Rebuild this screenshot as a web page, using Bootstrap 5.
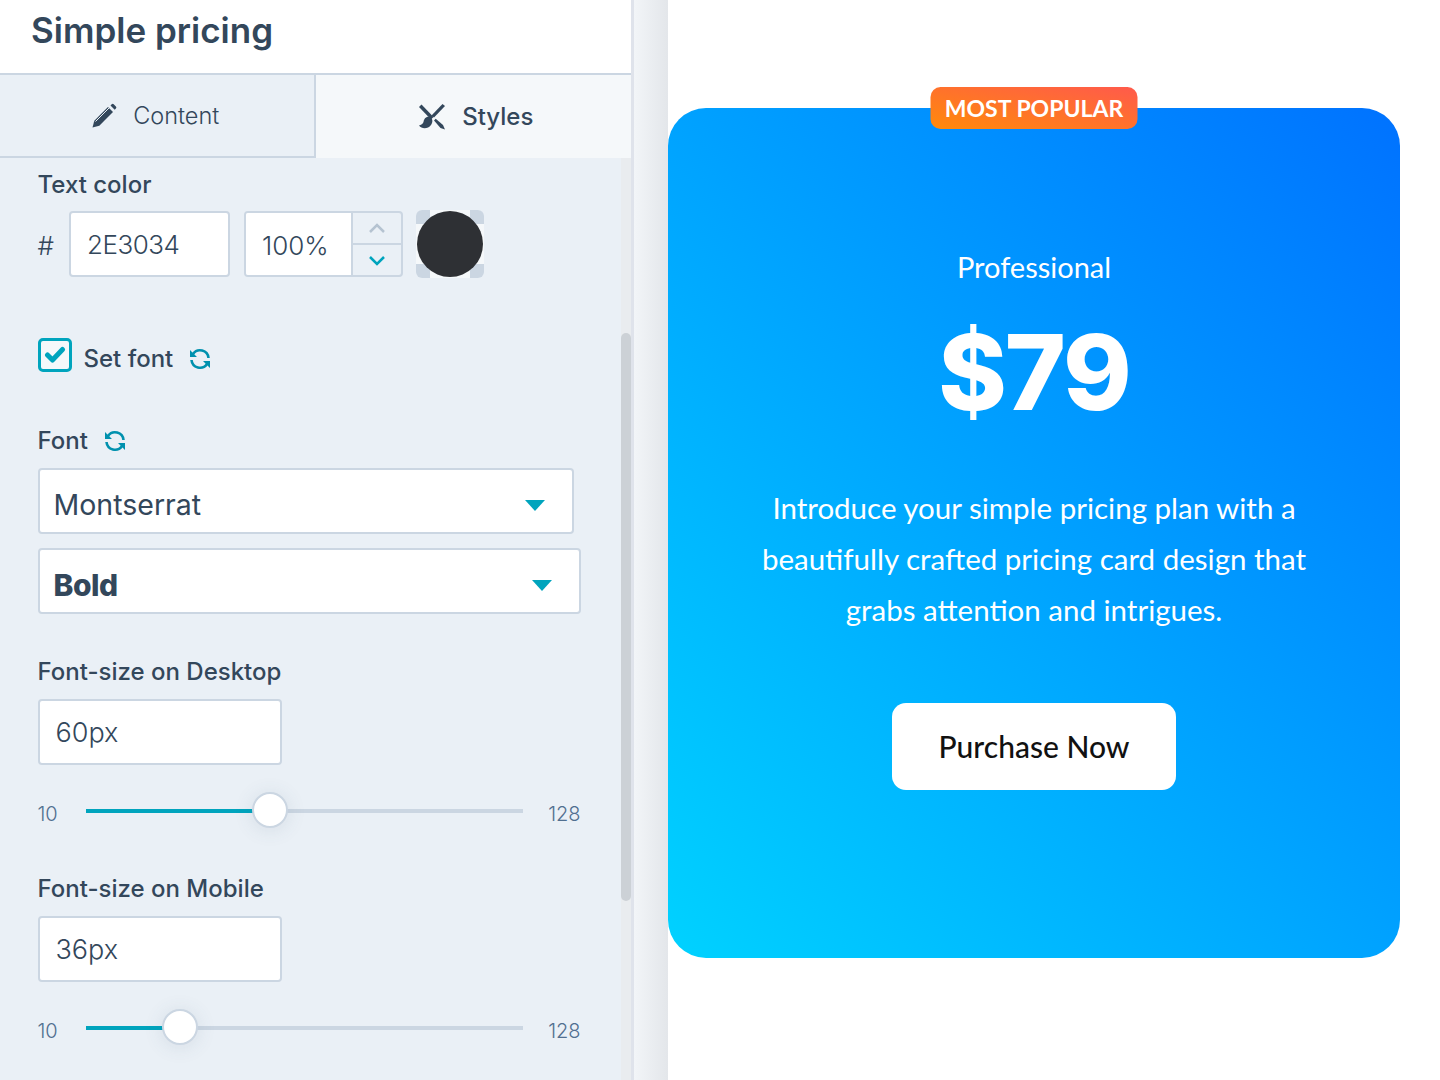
<!DOCTYPE html>
<html lang="en"><head><meta charset="utf-8"><title>Simple pricing</title>
<link href="https://cdn.jsdelivr.net/npm/bootstrap@5.3.0/dist/css/bootstrap.min.css" rel="stylesheet">
<style>
html,body{height:1080px;overflow:hidden;background:#fff}
body{font-family:Inter,"Liberation Sans",sans-serif;color:#33475b}
.stage{height:1080px}
.side{width:634px;height:1080px;flex:none;border-right:3px solid #dfe3eb;background:#eaf0f6}
.side-head{height:75px;background:#fff;border-bottom:2px solid #cbd6e2;padding:8px 0 0 31px;font-size:35px;font-weight:600;line-height:44px;color:#33475b}
.tabs-row{height:83px;flex:none}
.tab-item{width:50%;font-size:24px;line-height:30px;gap:17px;color:#33475b}
.tab-off{background:#eaf0f6;border-right:2px solid #cbd6e2;border-bottom:2px solid #cbd6e2;font-weight:300;font-size:23.500px;gap:16px;padding-right:2px}
.tab-on{background:#f5f8fa;font-weight:500;padding-left:6px}
.scroller{flex:1;min-height:0;padding:13px 0 0 37.5px}
.track-bar{top:0;right:0;bottom:0;width:10px;background:#e9ecef}
.thumb-bar{top:175px;height:568px;left:0;right:0;background:#ccd1d6;border-radius:5px}
.lab{font-size:24px;font-weight:500;line-height:28px;color:#33475b}
.field{height:66px;border:2px solid #cbd6e2;border-radius:4px;background:#fff;font-size:27px;font-weight:300;color:#33475b;padding:0 16px;line-height:60px;box-shadow:none}
.hash{font-size:26px;font-weight:300;width:31.5px;padding-top:2px}
.color-row{margin-top:12px;height:66px}
.w-hex{width:161px;font-size:26px;letter-spacing:-.5px}
.pct{width:159px;height:66px;margin-left:14px;border:2px solid #cbd6e2;border-radius:4px;overflow:hidden;background:#eaf0f6}
.pct-val{width:107px;background:#fff;border-right:2px solid #cbd6e2;font-size:26px;font-weight:300;padding-left:16px;line-height:65px}
.pct-btn{flex:1}
.pct-btn+.pct-btn{border-top:2px solid #cbd6e2}
.swatch{width:68px;height:68px;margin-left:13px;background:#f5f8fa;border-radius:6px;overflow:hidden}
.corner{width:14px;height:14px;background:#cbd6e2}
.c1{top:0;left:0}.c2{top:0;right:0}.c3{bottom:0;left:0}.c4{bottom:0;right:0}
.dot{inset:1px;border-radius:50%;background:#2e3034}
.set-row{margin-top:60px;height:36px}
.tick{width:34px;height:34px;border:3px solid #00a4bd;border-radius:5px;background:#f5f8fa}
.set-row .lab{margin-left:12px;padding-top:8px}
.set-row svg.sync-ic{margin-top:8px}
.font-lab{margin-top:54px}
.pick{height:66px;border:2px solid #cbd6e2;border-radius:4px;background:#fff;padding:8px 27px 0 14px;font-size:28.500px;line-height:40px}
.pick-a{width:536px;margin-top:13px;font-weight:400}
.pick-b{width:543px;margin-top:14px;font-weight:800;letter-spacing:-.5px;font-size:30px}
.caret{width:0;height:0;border-left:10.500px solid transparent;border-right:10.500px solid transparent;border-top:11px solid #00a4bd}
.size-lab{margin-top:44px}
.size-lab.second{margin-top:46px}
.w-size{width:244px;margin-top:13px}
.slide-row{margin-top:28px;width:543px;height:36px;color:#516f90;font-size:20px;font-weight:300}
.slide-num{width:48px;padding-top:6px}
.slide-end{width:58px;text-align:right;padding-top:6px}
.rail{flex:1;height:36px}
.rail-line{left:0;right:0;top:16px;height:4px;background:#cbd6e2}
.rail-fill{left:0;top:16px;height:4px;background:#00a4bd}
.knob{top:-1px;width:36px;height:36px;border-radius:50%;background:#fff;border:2px solid #cbd6e2;box-shadow:0 2px 20px rgba(66,91,118,.12)}
.gutter{width:34px;height:1080px;flex:none;background:linear-gradient(90deg,#f2f5f8,#e3e6ea)}
.canvas{flex:1;padding:108px 40px 0 0}
.price-card{height:850px;border-radius:38px;background:linear-gradient(to top right,#00d2ff,#0072ff);color:#fff;font-family:Lato,sans-serif;padding-top:138px}
.flag{top:-21px;left:50%;transform:translateX(-50%);height:42px;width:207px;border-radius:10px;background:linear-gradient(to top right,#ff8a0a,#ff5a4c);font-size:23px;font-weight:700;line-height:42px;white-space:nowrap}
.p-name{font-size:29px;line-height:42px;font-weight:400}
.p-amt{font-family:Inter,sans-serif;font-size:104px;font-weight:800;line-height:120px;margin-top:24px;letter-spacing:-2px}
.p-desc{font-size:29.500px;line-height:51px;font-weight:400;margin-top:50px}
.buy{width:284px;height:87px;margin-top:68px;background:#fff;color:#111;border-radius:14px;font-size:30px;font-weight:500;border:0;line-height:87px;padding:0;font-family:Lato,sans-serif}
</style></head><body>
<div class="stage d-flex">
 <aside class="side d-flex flex-column">
  <div class="side-head flex-shrink-0">Simple pricing</div>
  <div class="tabs-row d-flex">
   <div class="tab-item tab-off d-flex align-items-center justify-content-center">
    <svg width="25" height="25" viewBox="0 0 25 25"><path d="M0.500 24.500l1.800-6.800L16 4l5 5L7.300 22.700z" fill="#33475b"/><path d="M3.500 18.500L17 5" stroke="#eaf0f6" stroke-width="1" fill="none"/><path d="M18.500 2.500l1.200-1.200a1.400 1.400 0 0 1 2 0l2.200 2.200a1.400 1.400 0 0 1 0 2L22.700 6.700z" fill="#33475b"/></svg>
    <span>Content</span></div>
   <div class="tab-item tab-on d-flex align-items-center justify-content-center">
    <svg width="26" height="26" viewBox="0 0 26 26" fill="#33475b"><path d="M0 3l2.500-2.500 12 12.500-2.500 2.500z"/><path d="M11 13C7 12 5 15 4.500 18 4 20 2 21 0 21.500 3 25.500 9 25 12 21c2-3 2-6-1-8z"/><path d="M23.500 0L26 2 15 13.500l-2.500-2z"/><path d="M15 16.500l1.700-1.700L24 21l2 4.500-4.500-1.500z"/></svg>
    <span>Styles</span></div>
  </div>
  <div class="scroller position-relative overflow-hidden">
   <div class="track-bar position-absolute"><div class="thumb-bar position-absolute"></div></div>
   <div class="lab">Text color</div>
   <div class="color-row d-flex align-items-center">
    <span class="hash">#</span>
    <input class="form-control field w-hex" value="2E3034" aria-label="Hex">
    <div class="pct d-flex">
     <div class="pct-val">100%</div>
     <div class="d-flex flex-column flex-grow-1">
      <div class="pct-btn d-flex align-items-center justify-content-center"><svg width="18" height="11" viewBox="0 0 18 11" fill="none" stroke="#b5c3d1" stroke-width="2.500"><path d="M2 9l7-7 7 7"/></svg></div>
      <div class="pct-btn d-flex align-items-center justify-content-center"><svg width="18" height="11" viewBox="0 0 18 11" fill="none" stroke="#00a4bd" stroke-width="2.500"><path d="M2 2l7 7 7-7"/></svg></div>
     </div>
    </div>
    <div class="swatch position-relative"><i class="corner c1 position-absolute"></i><i class="corner c2 position-absolute"></i><i class="corner c3 position-absolute"></i><i class="corner c4 position-absolute"></i><i class="dot position-absolute"></i></div>
   </div>
   <div class="set-row d-flex align-items-center">
    <span class="tick d-flex align-items-center justify-content-center"><svg width="22" height="18" viewBox="0 0 22 18" fill="none" stroke="#00a4bd" stroke-width="5" stroke-linecap="round" stroke-linejoin="round"><path d="M3.500 9l5 5L18.500 3.500"/></svg></span>
    <span class="lab">Set font</span>
    <svg class="ms-3 sync-ic" width="22" height="22" viewBox="0 0 22 22" fill="none"><path d="M4 6A8.500 8.500 0 0 1 19.500 10M18 16A8.500 8.500 0 0 1 2.500 12" stroke="#0091ae" stroke-width="2.600"/><path d="M1 2v7h7zM21 20v-7h-7z" fill="#0091ae"/></svg>
   </div>
   <div class="font-lab d-flex align-items-center"><span class="lab">Font</span>
    <svg class="ms-3" width="22" height="22" viewBox="0 0 22 22" fill="none"><path d="M4 6A8.500 8.500 0 0 1 19.500 10M18 16A8.500 8.500 0 0 1 2.500 12" stroke="#0091ae" stroke-width="2.600"/><path d="M1 2v7h7zM21 20v-7h-7z" fill="#0091ae"/></svg>
   </div>
   <div class="pick pick-a d-flex align-items-center justify-content-between"><span>Montserrat</span><i class="caret"></i></div>
   <div class="pick pick-b d-flex align-items-center justify-content-between"><span>Bold</span><i class="caret"></i></div>
   <div class="lab size-lab">Font-size on Desktop</div>
   <input class="form-control field w-size" value="60px" aria-label="Desktop size">
   <div class="slide-row d-flex"><span class="slide-num">10</span><div class="rail position-relative"><i class="rail-line position-absolute"></i><i class="rail-fill position-absolute" style="width:168px"></i><i class="knob position-absolute" style="left:166px"></i></div><span class="slide-end">128</span></div>
   <div class="lab size-lab second">Font-size on Mobile</div>
   <input class="form-control field w-size" value="36px" aria-label="Mobile size">
   <div class="slide-row d-flex"><span class="slide-num">10</span><div class="rail position-relative"><i class="rail-line position-absolute"></i><i class="rail-fill position-absolute" style="width:78px"></i><i class="knob position-absolute" style="left:76px"></i></div><span class="slide-end">128</span></div>
  </div>
 </aside>
 <div class="gutter"></div>
 <main class="canvas">
  <div class="price-card position-relative text-center">
   <div class="flag position-absolute">MOST POPULAR</div>
   <div class="p-name">Professional</div>
   <div class="p-amt">$79</div>
   <p class="p-desc mb-0">Introduce your simple pricing plan with a<br>beautifully crafted pricing card design that<br>grabs attention and intrigues.</p>
   <button class="btn buy">Purchase Now</button>
  </div>
 </main>
</div>
<script src="https://cdn.jsdelivr.net/npm/bootstrap@5.3.0/dist/js/bootstrap.bundle.min.js"></script>
</body></html>
